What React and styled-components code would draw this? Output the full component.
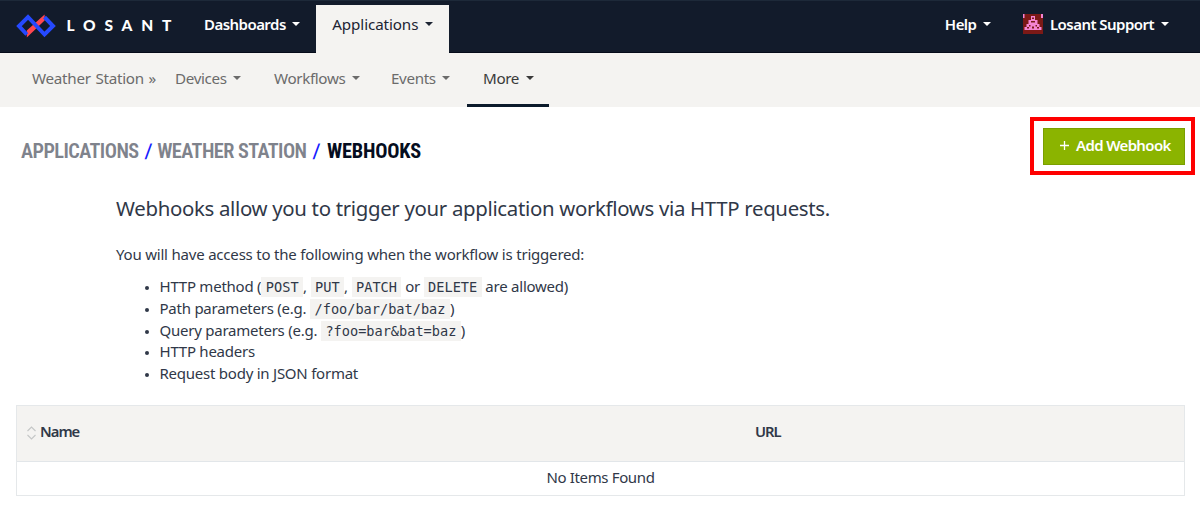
import React from 'react';
import styled, { createGlobalStyle } from 'styled-components';

const sans = '"Noto Sans", "Open Sans", sans-serif';

const GlobalStyle = createGlobalStyle`
  *, *::before, *::after { box-sizing: border-box; }
  body {
    margin: 0;
    background: #fff;
    color: #303848;
    font-family: ${sans};
  }
`;

const Page = styled.div`
  width: 1200px;
  height: 528px;
  overflow: hidden;
`;

const TopBar = styled.header`
  display: flex;
  align-items: flex-end;
  height: 53px;
  padding-left: 16px;
  background: #121b2b;
  box-shadow: inset 0 1px #1d2939, inset 0 -1px #050b1a;
`;

const Brand = styled.a`
  display: flex;
  align-items: center;
  align-self: flex-start;
  width: 172px;
  height: 51px;
`;

const LogoMark = styled.svg`
  width: 40px;
  height: 24px;
`;

const Wordmark = styled.span`
  margin: -1px 0 0 10.5px;
  color: #fff;
  font: 900 15.5px/20px Lato, sans-serif;
  letter-spacing: 8.8px;
`;

const Caret = styled.span`
  width: 0;
  height: 0;
  margin-left: 6.5px;
  border: 4px solid transparent;
  border-top: 4.5px solid currentColor;
  border-bottom: 0;
`;

const NavItem = styled.a`
  display: flex;
  align-items: center;
  height: 48px;
  padding: 0 16px 9.5px;
  color: ${(p) => (p.$active ? '#1c2433' : '#fff')};
  background: ${(p) => (p.$active ? '#f4f3f1' : 'transparent')};
  font-size: ${(p) => (p.$active ? 15.2 : 15)}px;
  font-weight: ${(p) => (p.$active ? 400 : 600)};
  letter-spacing: ${(p) => (p.$active ? -0.1 : -0.54)}px;
  white-space: nowrap;
`;

const NavRight = styled.div`
  display: flex;
  margin-left: auto;
  padding-right: 15.5px;
`;

const Avatar = styled.svg`
  width: 20px;
  height: 20px;
  margin-right: 7px;
`;

const SubBar = styled.nav`
  display: flex;
  height: 54px;
  padding-left: 32px;
  background: #f4f3f1;
`;

const Crumb = styled.span`
  display: flex;
  align-items: center;
  width: 127px;
  padding-bottom: 4px;
  color: #6b6b6b;
  font-size: 15.2px;
  letter-spacing: -0.27px;
  word-spacing: 1px;
  white-space: nowrap;
`;

const SubItems = styled.div`
  display: flex;
`;

const SubItem = styled.a`
  display: flex;
  align-items: center;
  width: ${(p) => p.$width}px;
  padding: 0 16px ${(p) => (p.$active ? 1 : 4)}px;
  border-bottom: ${(p) => (p.$active ? '3px solid #0b1a2b' : '0')};
  color: ${(p) => (p.$active ? '#3a3a3a' : '#6b6b6b')};
  font-size: 15.2px;
  letter-spacing: -0.36px;
  white-space: nowrap;
`;

const TitleRow = styled.div`
  display: flex;
  align-items: center;
  justify-content: space-between;
  height: 78px;
  padding: 0 15px 0 21px;
`;

const Breadcrumbs = styled.h1`
  display: flex;
  gap: 6px;
  margin: 9px 0 0;
  color: #7f838c;
  font: 600 20.3px/24px Roboto, sans-serif;
  font-stretch: 75%;
  letter-spacing: -0.55px;
`;

const Slash = styled.span`
  color: #1620ff;
  font-weight: 500;
  transform: skewX(-4deg);
`;

const Current = styled.span`
  margin-left: 2px;
  color: #050d20;
  font-weight: 700;
  letter-spacing: -0.2px;
`;

const Highlight = styled.div`
  margin-right: -10px;
  padding: 7px 6px 6px 9px;
  border: 4px solid #fe0000;
`;

const AddButton = styled.button`
  display: flex;
  align-items: center;
  width: 142px;
  height: 37px;
  padding: 0 0 3px 16px;
  border: 1px solid #7a9f00;
  background: #8bb400;
  color: #fff;
  font: 600 15px/20px ${sans};
  letter-spacing: -0.65px;
  white-space: nowrap;
`;

const Plus = styled.svg`
  width: 9px;
  height: 9px;
  margin-right: 7px;
`;

const Intro = styled.section`
  padding: 8px 116px 0;
  font-size: 15px;
  line-height: 21.7px;
`;

const Lead = styled.p`
  margin: 0 0 19px;
  font-size: 20.4px;
  line-height: 30px;
  letter-spacing: -0.32px;
`;

const Para = styled.p`
  margin: 0;
  padding-top: 2px;
  letter-spacing: -0.2px;
`;

const List = styled.ul`
  margin: 10.5px 0 0;
  padding: 0 0 0 43.5px;
  letter-spacing: -0.24px;
`;

const Item = styled.li`
  height: 21.7px;
  white-space: nowrap;

  &::marker { font-size: 12px; }
`;

const Code = styled.code`
  padding: 2px 4.5px;
  background: #f4f3f1;
  font: 13.6px/16px "DejaVu Sans Mono", monospace;
  letter-spacing: 0;
`;

const Table = styled.div`
  margin: 20px 15px 0 16px;
  border: 1px solid #e5e8ea;
  font-size: 15px;
  letter-spacing: -0.35px;
`;

const HeadRow = styled.div`
  display: grid;
  grid-template-columns: 728px 1fr;
  height: 56px;
  border-bottom: 1px solid #e2e6e9;
  background: #f4f3f1;
  font-size: 14.8px;
  font-weight: 600;
  letter-spacing: -1px;
`;

const HeadCell = styled.div`
  display: flex;
  align-items: center;
  padding: 0 10px 4px;
`;

const SortIcon = styled.svg`
  width: 9px;
  height: 14px;
  margin: 4px 4px 0 0;
`;

const EmptyRow = styled.div`
  height: 33px;
  line-height: 30px;
  text-align: center;
`;

const avatarPink = [
  [0, 0, 1.5, 4],
  [18, 0, 2, 4],
  [8, 2, 4, 4],
  [5.5, 6, 9, 4],
  [3.5, 10, 13, 3],
  [1.5, 13, 17, 3],
];

const avatarDark = [
  [9, 3.5, 2, 1.5],
  [8, 7, 4, 1.5],
  [6, 11, 1.5, 1.5],
  [12.5, 11, 1.5, 1.5],
  [4, 13, 2, 1.5],
  [9, 12.5, 2, 2],
  [14, 13, 2, 1.5],
];

const Cells = ({ cells, fill }) => (
  <g fill={fill}>
    {cells.map(([x, y, width, height]) => (
      <rect key={`${x}-${y}`} x={x} y={y} width={width} height={height} />
    ))}
  </g>
);

const NavLink = ({ label, active, children }) => (
  <NavItem $active={active}>
    {children}
    {label}
    <Caret />
  </NavItem>
);

const SubLink = ({ label, width, active }) => (
  <SubItem $width={width} $active={active}>
    {label}
    <Caret />
  </SubItem>
);

export default function App() {
  return (
    <Page>
      <GlobalStyle />
      <TopBar>
        <Brand>
          <LogoMark viewBox="0 0 40 24" fill="none">
            <path d="M10.8 16.4L28.6 0.5V6.5L10.8 23.5Z" fill="#ff4650" />
            <path d="M10.8 20.5L3 12L12 3L28.5 20.5L37 12L28.5 3.2" stroke="#2549ff" strokeWidth="4" />
          </LogoMark>
          <Wordmark>LOSANT</Wordmark>
        </Brand>
        <NavLink label="Dashboards" />
        <NavLink label="Applications" active />
        <NavRight>
          <NavLink label="Help" />
          <NavLink label="Losant Support">
            <Avatar viewBox="0 0 20 20">
              <rect width="20" height="20" fill="#7b1916" />
              <Cells cells={avatarPink} fill="#f584d2" />
              <Cells cells={avatarDark} fill="#7b1916" />
            </Avatar>
          </NavLink>
        </NavRight>
      </TopBar>
      <SubBar>
        <Crumb>Weather Station »</Crumb>
        <SubItems>
          <SubLink label="Devices" width={99} />
          <SubLink label="Workflows" width={117} />
          <SubLink label="Events" width={92} />
          <SubLink label="More" width={82} active />
        </SubItems>
      </SubBar>
      <TitleRow>
        <Breadcrumbs>
          <span>APPLICATIONS</span>
          <Slash>/</Slash>
          <span>WEATHER STATION</span>
          <Slash>/</Slash>
          <Current>WEBHOOKS</Current>
        </Breadcrumbs>
        <Highlight>
          <AddButton>
            <Plus viewBox="0 0 9 9" stroke="#fff" strokeWidth="1.3">
              <path d="M4.5 0v9M0 4.5h9" />
            </Plus>
            Add Webhook
          </AddButton>
        </Highlight>
      </TitleRow>
      <Intro>
        <Lead>Webhooks allow you to trigger your application workflows via HTTP requests.</Lead>
        <Para>You will have access to the following when the workflow is triggered:</Para>
        <List>
          <Item>
            HTTP method (<Code>POST</Code>, <Code>PUT</Code>, <Code>PATCH</Code> or <Code>DELETE</Code> are allowed)
          </Item>
          <Item>Path parameters (e.g. <Code>/foo/bar/bat/baz</Code>)</Item>
          <Item>Query parameters (e.g. <Code>?foo=bar&amp;bat=baz</Code>)</Item>
          <Item>HTTP headers</Item>
          <Item>Request body in JSON format</Item>
        </List>
      </Intro>
      <Table>
        <HeadRow>
          <HeadCell>
            <SortIcon viewBox="0 0 9 14" fill="none" stroke="#c4c6c6" strokeWidth="1.1">
              <path d="M0.5 5L4.5 1L8.5 5M0.5 9L4.5 13L8.5 9" />
            </SortIcon>
            Name
          </HeadCell>
          <HeadCell>URL</HeadCell>
        </HeadRow>
        <EmptyRow>No Items Found</EmptyRow>
      </Table>
    </Page>
  );
}
